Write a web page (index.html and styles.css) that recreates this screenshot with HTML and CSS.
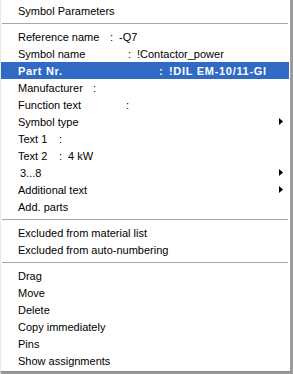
FILE: index.html
```html
<!DOCTYPE html>
<html>
<head>
<meta charset="utf-8">
<link rel="stylesheet" href="styles.css">
</head>
<body>
<div class="screen">
  <div class="menu">
    <div class="item">Symbol Parameters</div>
    <div class="sep"></div>
    <div class="item"><span class="k k-ref">Reference name</span><span class="c">:</span><span class="v">-Q7</span></div>
    <div class="item"><span class="k k-sym">Symbol name</span><span class="c">:</span><span class="v">!Contactor_power</span></div>
    <div class="item active"><span class="k k-part">Part Nr.</span><span class="c">:</span><span class="v">!DIL EM-10/11-Gl</span></div>
    <div class="item"><span class="k k-man">Manufacturer</span><span class="c">:</span></div>
    <div class="item"><span class="k k-fun">Function text</span><span class="c">:</span></div>
    <div class="item sub">Symbol type<svg class="arrow" width="4" height="7" viewBox="0 0 4 7"><path d="M0 0 L4 3.5 L0 7 Z" fill="#000"/></svg></div>
    <div class="item"><span class="k k-txt">Text 1</span><span class="c">:</span></div>
    <div class="item"><span class="k k-txt">Text 2</span><span class="c">:</span><span class="v">4 kW</span></div>
    <div class="item sub"><span class="lead">3...8</span><svg class="arrow" width="4" height="7" viewBox="0 0 4 7"><path d="M0 0 L4 3.5 L0 7 Z" fill="#000"/></svg></div>
    <div class="item sub">Additional text<svg class="arrow" width="4" height="7" viewBox="0 0 4 7"><path d="M0 0 L4 3.5 L0 7 Z" fill="#000"/></svg></div>
    <div class="item">Add. parts</div>
    <div class="sep"></div>
    <div class="item">Excluded from material list</div>
    <div class="item">Excluded from auto-numbering</div>
    <div class="sep"></div>
    <div class="item">Drag</div>
    <div class="item">Move</div>
    <div class="item">Delete</div>
    <div class="item">Copy immediately</div>
    <div class="item">Pins</div>
    <div class="item">Show assignments</div>
  </div>
</div>
</body>
</html>
```
FILE: styles.css
```css
html, body {
  margin: 0;
  padding: 0;
}
body {
  width: 293px;
  height: 374px;
  overflow: hidden;
  background: #9c9c9c;
}
.screen {
  width: 293px;
  height: 374px;
  background: linear-gradient(to right, #d8d8d8 0, #d8d8d8 1px, #9a9a9a 1px);
}
.menu {
  width: 288px;
  background: #fff;
  border-left: 1px solid #e8ebe0;
  border-right: 1px solid #a0a0a0;
  border-bottom: 1px solid #8a8a8a;
  padding: 2px 1px 2px 0;
  display: flex;
  flex-direction: column;
  font-family: "Liberation Sans", Arial, sans-serif;
  font-size: 11px;
  color: #000;
}
.item {
  height: 17px;
  display: flex;
  align-items: center;
  padding-left: 17px;
  white-space: pre;
}
.item.active {
  background: #316ac5;
  color: #fff;
  font-weight: bold;
  letter-spacing: 0.7px;
}
.item.sub {
  justify-content: space-between;
  padding-right: 6px;
}
.lead {
  padding-left: 2px;
}
.k {
  display: inline-block;
}
.k-ref { width: 92px; }
.k-sym { width: 110px; }
.k-part { width: 141px; }
.k-man { width: 75px; }
.k-fun { width: 108px; }
.k-txt { width: 41px; }
.c {
  display: inline-block;
  width: 9px;
}
.active .c {
  width: 10px;
}
.sep {
  height: 9px;
  display: flex;
  align-items: center;
  padding-left: 1px;
}
.sep::before {
  content: "";
  display: block;
  width: 286px;
  height: 1px;
  background: #aca899;
}
```
